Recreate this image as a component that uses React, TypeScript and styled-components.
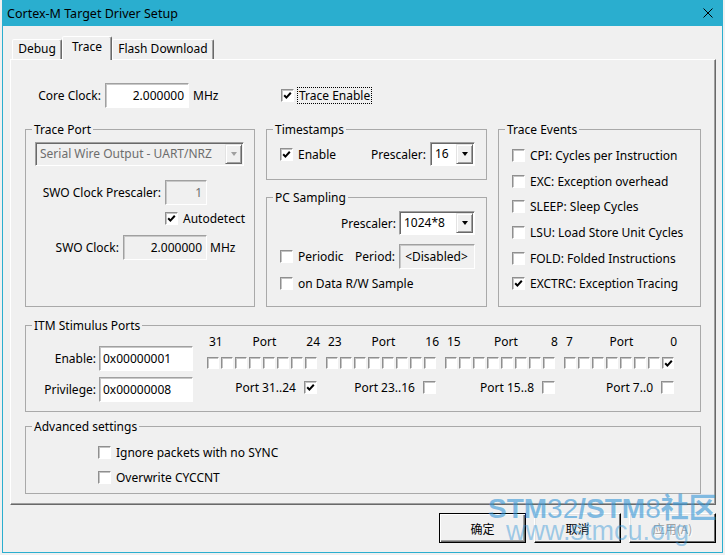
import styled, { createGlobalStyle } from 'styled-components'

const GlobalStyle = createGlobalStyle`
  html, body {
    margin: 0;
    padding: 0;
    background: #f0f0f0;
  }
  body {
    font-family: "Noto Sans", "Noto Sans CJK SC", sans-serif;
    font-size: 12px;
    color: #000;
  }
  *, *::before, *::after {
    box-sizing: border-box;
  }
`

const Window = styled.div`
  position: relative;
  width: 721px;
  height: 553px;
  margin-left: 2px;
  border: 1px solid #2aaecf;
  border-top: none;
  background: #f0f0f0;
  display: flex;
  flex-direction: column;
  overflow: hidden;
`

const TitleBar = styled.div`
  flex: 0 0 26px;
  background: #2aaecf;
  display: flex;
  align-items: center;
  justify-content: space-between;
  padding: 0 9px 0 4px;
  font-size: 12.5px;
`

const Body = styled.div`
  flex: 1;
  display: flex;
  flex-direction: column;
  padding: 10px 6px 0 7px;
`

const TabStrip = styled.div`
  display: flex;
  align-items: flex-end;
  height: 23px;
  padding-left: 2px;
  position: relative;
  z-index: 1;
`

const Tab = styled.div<{ $active?: boolean; $w: number }>`
  width: ${p => p.$w}px;
  height: ${p => (p.$active ? 24 : 20)}px;
  margin-bottom: ${p => (p.$active ? -1 : 0)}px;
  padding-top: ${p => (p.$active ? 2 : 1)}px;
  line-height: 16px;
  text-align: center;
  background: #f0f0f0;
  border: 1px solid;
  border-bottom: none;
  border-color: #fff #696969 transparent #fff;
  border-radius: 2px 2px 0 0;
  box-shadow: inset -1px 0 #a0a0a0;
  white-space: nowrap;
`

const Panel = styled.div`
  height: 446px;
  border: 1px solid;
  border-color: #fff #696969 #696969 #fff;
  box-shadow: inset -1px -1px #a0a0a0;
  padding: 23px 14px 0 14px;
  display: flex;
  flex-direction: column;
`

const Row = styled.div<{ $h?: number; $mt?: number; $ml?: number; $justify?: string }>`
  display: flex;
  align-items: center;
  height: ${p => p.$h ?? 25}px;
  margin-top: ${p => p.$mt ?? 0}px;
  margin-left: ${p => p.$ml ?? 0}px;
  justify-content: ${p => p.$justify ?? 'flex-start'};
  flex: 0 0 auto;
`

const Block = styled.div<{ $w: number }>`
  display: flex;
  align-items: center;
  width: ${p => p.$w}px;
  flex: 0 0 auto;
`

const Label = styled.span<{ $w?: number; $pr?: number }>`
  width: ${p => (p.$w ? `${p.$w}px` : 'auto')};
  padding-right: ${p => p.$pr ?? 4}px;
  text-align: right;
  white-space: nowrap;
  flex: 0 0 auto;
`

const Unit = styled.span<{ $ml?: number }>`
  margin-left: ${p => p.$ml ?? 4}px;
  white-space: nowrap;
`

const Field = styled.div<{
  $w: number
  $disabled?: boolean
  $muted?: boolean
  $align?: 'left' | 'right' | 'center'
}>`
  width: ${p => p.$w}px;
  height: 25px;
  flex: 0 0 auto;
  display: flex;
  align-items: center;
  justify-content: ${p =>
    p.$align === 'right' ? 'flex-end' : p.$align === 'center' ? 'center' : 'flex-start'};
  padding: 0 4px 1px 3px;
  background: ${p => (p.$disabled ? '#f0f0f0' : '#fff')};
  color: ${p => (p.$muted ? '#6d6d6d' : '#000')};
  border: 1px solid;
  border-color: #a0a0a0 #fff #fff #a0a0a0;
  box-shadow: inset 1px 1px #c8c8c8;
  white-space: nowrap;
`

const ComboBox = styled.div<{ $w: number; $disabled?: boolean }>`
  width: ${p => p.$w}px;
  height: 24px;
  flex: 0 0 auto;
  display: flex;
  align-items: stretch;
  padding: 1px;
  background: ${p => (p.$disabled ? '#f0f0f0' : '#fff')};
  color: ${p => (p.$disabled ? '#6d6d6d' : '#000')};
  border: 1px solid;
  border-color: #a0a0a0 #fff #fff #a0a0a0;
  box-shadow: inset 1px 1px #696969;
`

const ComboText = styled.span`
  flex: 1;
  display: flex;
  align-items: center;
  padding: 0 2px 1px 3px;
  white-space: nowrap;
  overflow: hidden;
`

const ComboButton = styled.span`
  width: 17px;
  flex: 0 0 17px;
  display: flex;
  align-items: center;
  justify-content: center;
  background: #f0f0f0;
  border: 1px solid;
  border-color: #e3e3e3 #696969 #696969 #e3e3e3;
  box-shadow: inset 1px 1px #fff, inset -1px -1px #a0a0a0;
`

const Arrow = styled.span<{ $disabled?: boolean }>`
  width: 0;
  height: 0;
  border-left: 3.5px solid transparent;
  border-right: 3.5px solid transparent;
  border-top: 4px solid ${p => (p.$disabled ? '#a0a0a0' : '#000')};
`

const CheckRow = styled.div<{ $h?: number; $ml?: number; $mt?: number }>`
  display: flex;
  align-items: center;
  gap: 3px;
  height: ${p => p.$h ?? 17}px;
  margin-left: ${p => p.$ml ?? 0}px;
  margin-top: ${p => p.$mt ?? 0}px;
  white-space: nowrap;
  flex: 0 0 auto;
`

const Box = styled.span<{ $size?: number }>`
  width: ${p => p.$size ?? 13}px;
  height: ${p => p.$size ?? 13}px;
  flex: 0 0 auto;
  display: flex;
  align-items: center;
  justify-content: center;
  background: #fff;
  border: 1px solid;
  border-color: #8f8f8f #fff #fff #8f8f8f;
  box-shadow: inset 1px 1px #c4c4c4;
`

const CheckText = styled.span<{ $focus?: boolean }>`
  line-height: 15px;
  padding: 0 1px;
  border: 1px dotted ${p => (p.$focus ? '#000' : 'transparent')};
`

const GroupsRow = styled.div`
  display: flex;
  gap: 11px;
  margin-top: 13px;
`

const Column = styled.div`
  display: flex;
  flex-direction: column;
  gap: 9px;
`

const Group = styled.fieldset<{ $w?: number; $h: number; $mt?: number }>`
  margin: ${p => p.$mt ?? 0}px 0 0 0;
  padding: 0;
  min-width: 0;
  width: ${p => (p.$w ? `${p.$w}px` : 'auto')};
  height: ${p => p.$h}px;
  border: 1px solid #a9a9a9;
`

const Legend = styled.legend`
  margin-left: 6px;
  padding: 0 2px;
  height: 17px;
  line-height: 17px;
`

const GroupBody = styled.div<{ $pt?: number; $pl?: number; $pr?: number }>`
  display: flex;
  flex-direction: column;
  padding: ${p => p.$pt ?? 0}px ${p => p.$pr ?? 0}px 0 ${p => p.$pl ?? 0}px;
`

const EventRow = styled(CheckRow)`
  height: 25.6px;
`

const ItmBody = styled.div`
  display: flex;
`

const ItmLeft = styled.div`
  display: flex;
  flex-direction: column;
  gap: 6px;
  padding-top: 12px;
`

const Ports = styled.div`
  display: flex;
  gap: 9px;
  margin-left: 14px;
`

const PortGroup = styled.div`
  width: 110px;
  display: flex;
  flex-direction: column;
`

const PortHeader = styled.div`
  height: 16px;
  line-height: 16px;
  display: flex;
  justify-content: space-between;
  padding-left: 2px;
  margin-right: -3px;
`

const Bits = styled.div`
  display: flex;
  gap: 2px;
  margin-top: 7px;
`

const PrivRow = styled.div`
  height: 17px;
  margin-top: 10px;
  display: flex;
  align-items: center;
  justify-content: flex-end;
  gap: 8px;
  white-space: nowrap;
`

const ButtonRow = styled.div`
  display: flex;
  justify-content: flex-end;
  gap: 8px;
  margin-top: 8px;
`

const Button = styled.div<{ $default?: boolean; $disabled?: boolean }>`
  width: 87px;
  height: 30px;
  display: flex;
  align-items: center;
  justify-content: center;
  font-family: "Noto Sans CJK SC", "Noto Sans", sans-serif;
  font-size: 12px;
  color: ${p => (p.$disabled ? '#a0a0a0' : '#000')};
  text-shadow: ${p => (p.$disabled ? '1px 1px #fff' : 'none')};
  background: #f0f0f0;
  border: 1px solid;
  border-color: ${p => (p.$default ? '#000' : '#fff #000 #000 #fff')};
  box-shadow: ${p =>
    p.$default
      ? 'inset 1px 1px #fff, inset -1px -1px #696969, inset -2px -2px #a0a0a0'
      : 'inset -1px -1px #696969, inset 1px 1px #e3e3e3'};
`

const Watermark = styled.div`
  position: absolute;
  left: 485px;
  top: 495px;
  font-family: "Liberation Sans", "Noto Sans CJK SC", sans-serif;
  font-size: 28px;
  line-height: 28px;
  color: rgba(52, 150, 215, 0.6);
  pointer-events: none;
  white-space: nowrap;
`

const Strong = styled.span<{ $thin?: boolean }>`
  font-weight: ${p => (p.$thin ? 400 : 700)};
`

const Url = styled.div`
  margin: -6px 0 0 18px;
  font-size: 27px;
  color: rgba(52, 150, 215, 0.45);
`

const Tick = () => (
  <svg width="9" height="9" viewBox="0 0 9 9">
    <path d="M1.2 4.3 L3.4 6.6 L7.8 1.8" fill="none" stroke="#000" strokeWidth="2" />
  </svg>
)

const Combo = ({ w, text, disabled }: { w: number; text: string; disabled?: boolean }) => (
  <ComboBox $w={w} $disabled={disabled}>
    <ComboText>{text}</ComboText>
    <ComboButton>
      <Arrow $disabled={disabled} />
    </ComboButton>
  </ComboBox>
)

type CheckProps = {
  checked?: boolean
  label?: string
  focus?: boolean
  ml?: number
  mt?: number
}

const Check = ({ checked, label, focus, ml, mt }: CheckProps) => (
  <CheckRow $ml={ml} $mt={mt}>
    <Box>{checked && <Tick />}</Box>
    {label && <CheckText $focus={focus}>{label}</CheckText>}
  </CheckRow>
)

const traceEvents = [
  { label: 'CPI: Cycles per Instruction', on: false },
  { label: 'EXC: Exception overhead', on: false },
  { label: 'SLEEP: Sleep Cycles', on: false },
  { label: 'LSU: Load Store Unit Cycles', on: false },
  { label: 'FOLD: Folded Instructions', on: false },
  { label: 'EXCTRC: Exception Tracing', on: true },
]

const itmEnable = 0x00000001
const itmPrivilege = 0x00000008

const portGroups = [
  { hi: 31, lo: 24 },
  { hi: 23, lo: 16 },
  { hi: 15, lo: 8 },
  { hi: 7, lo: 0 },
]

export default function App() {
  return (
    <>
      <GlobalStyle />
      <Window>
        <TitleBar>
          <span>Cortex-M Target Driver Setup</span>
          <svg width="10" height="10" viewBox="0 0 10 10">
            <path d="M0.5 0.5 L9.5 9.5 M9.5 0.5 L0.5 9.5" stroke="#000" strokeWidth="1" />
          </svg>
        </TitleBar>
        <Body>
          <TabStrip>
            <Tab $w={50}>Debug</Tab>
            <Tab $w={50} $active>Trace</Tab>
            <Tab $w={102}>Flash Download</Tab>
          </TabStrip>
          <Panel>
            <Row $ml={10}>
              <Block $w={246}>
                <Label $w={70}>Core Clock:</Label>
                <Field $w={84} $align="right">2.000000</Field>
                <Unit>MHz</Unit>
              </Block>
              <Check checked label="Trace Enable" focus />
            </Row>

            <GroupsRow>
              <Group $w={230} $h={186}>
                <Legend>Trace Port</Legend>
                <GroupBody $pt={4} $pl={9}>
                  <Combo w={209} text="Serial Wire Output - UART/NRZ" disabled />
                  <Row $mt={14}>
                    <Label $w={130}>SWO Clock Prescaler:</Label>
                    <Field $w={42} $align="right" $disabled $muted>1</Field>
                  </Row>
                  <Check checked label="Autodetect" ml={130} mt={5} />
                  <Row $mt={8}>
                    <Label $w={88}>SWO Clock:</Label>
                    <Field $w={84} $align="right" $disabled>2.000000</Field>
                    <Unit $ml={3}>MHz</Unit>
                  </Row>
                </GroupBody>
              </Group>

              <Column>
                <Group $w={221} $h={59}>
                  <Legend>Timestamps</Legend>
                  <GroupBody $pt={4} $pl={13} $pr={11}>
                    <Row $h={24} $justify="space-between">
                      <Check checked label="Enable" />
                      <Block $w={105}>
                        <Label $w={60}>Prescaler:</Label>
                        <Combo w={45} text="16" />
                      </Block>
                    </Row>
                  </GroupBody>
                </Group>
                <Group $w={221} $h={118}>
                  <Legend>PC Sampling</Legend>
                  <GroupBody $pt={5} $pl={13} $pr={11}>
                    <Row $h={24} $justify="flex-end">
                      <Label $pr={3}>Prescaler:</Label>
                      <Combo w={76} text="1024*8" />
                    </Row>
                    <Row $mt={9} $justify="space-between">
                      <Check label="Periodic" />
                      <Block $w={120}>
                        <Label $w={44}>Period:</Label>
                        <Field $w={76} $align="center" $disabled>&lt;Disabled&gt;</Field>
                      </Block>
                    </Row>
                    <Check label="on Data R/W Sample" mt={6} />
                  </GroupBody>
                </Group>
              </Column>

              <Group $w={203} $h={186}>
                <Legend>Trace Events</Legend>
                <GroupBody $pt={5} $pl={13}>
                  {traceEvents.map(ev => (
                    <EventRow key={ev.label}>
                      <Box>{ev.on && <Tick />}</Box>
                      <CheckText>{ev.label}</CheckText>
                    </EventRow>
                  ))}
                </GroupBody>
              </Group>
            </GroupsRow>

            <Group $h={95} $mt={10}>
              <Legend>ITM Stimulus Ports</Legend>
              <ItmBody>
                <ItmLeft>
                  <Row>
                    <Label $w={73} $pr={3}>Enable:</Label>
                    <Field $w={94}>0x00000001</Field>
                  </Row>
                  <Row>
                    <Label $w={73} $pr={3}>Privilege:</Label>
                    <Field $w={94}>0x00000008</Field>
                  </Row>
                </ItmLeft>
                <Ports>
                  {portGroups.map((g, gi) => (
                    <PortGroup key={g.hi}>
                      <PortHeader>
                        <span>{g.hi}</span>
                        <span>Port</span>
                        <span>{g.lo}</span>
                      </PortHeader>
                      <Bits>
                        {Array.from({ length: 8 }, (_, i) => {
                          const bit = g.hi - i
                          return (
                            <Box key={bit} $size={12}>
                              {(itmEnable >> bit) & 1 ? <Tick /> : null}
                            </Box>
                          )
                        })}
                      </Bits>
                      <PrivRow>
                        <span>{`Port ${g.hi}..${g.lo}`}</span>
                        <Box>{(itmPrivilege >> (3 - gi)) & 1 ? <Tick /> : null}</Box>
                      </PrivRow>
                    </PortGroup>
                  ))}
                </Ports>
              </ItmBody>
            </Group>

            <Group $h={76} $mt={6}>
              <Legend>Advanced settings</Legend>
              <GroupBody $pt={9} $pl={72}>
                <Check label="Ignore packets with no SYNC" />
                <Check label="Overwrite CYCCNT" mt={8} />
              </GroupBody>
            </Group>
          </Panel>

          <ButtonRow>
            <Button $default>确定</Button>
            <Button>取消</Button>
            <Button $disabled>应用(A)</Button>
          </ButtonRow>
        </Body>

        <Watermark>
          <div>
            <Strong>STM</Strong>
            <Strong $thin>32</Strong>
            <Strong>/STM</Strong>
            <Strong $thin>8</Strong>
            <Strong>社区</Strong>
          </div>
          <Url>www.stmcu.org</Url>
        </Watermark>
      </Window>
    </>
  )
}
